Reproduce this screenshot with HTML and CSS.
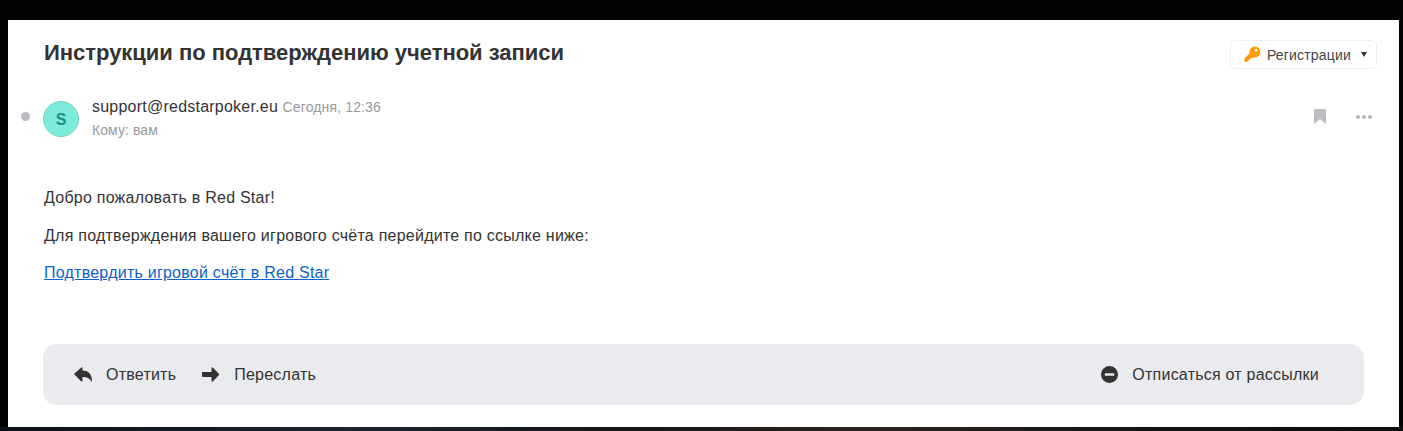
FILE: index.html
```html
<!DOCTYPE html>
<html lang="ru">
<head>
    <meta charset="UTF-8">
    <title>Инструкции по подтверждению учетной записи</title>
    <link rel="stylesheet" href="styles.css">
</head>
<body>
    <div class="letter">
        <div class="letter-head">
            <h1 class="subject">Инструкции по подтверждению учетной записи</h1>
            <div class="folder">
                <svg class="key-icon" width="17" height="17" viewBox="0 0 17 17">
                    <path fill="#ff9800" fill-rule="evenodd" d="M10.500.5a5.500 5.500 0 1 1-1.600 10.700L7.500 12.600H5.500v1.900H3.500V16H.5v-3.500l5.200-5.200A5.500 5.500 0 0 1 10.500.5zm1.500 2.300a1.500 1.500 0 1 0 0 3 1.500 1.500 0 0 0 0-3z"/>
                </svg>
                <span class="folder-name">Регистрации</span>
                <span class="folder-arrow"></span>
            </div>
        </div>

        <div class="sender-row">
            <span class="read-dot"></span>
            <div class="avatar">S</div>
            <div class="sender-info">
                <div class="sender-line">
                    <span class="sender">support@redstarpoker.eu</span>
                    <span class="date">Сегодня, 12:36</span>
                </div>
                <div class="recipient">Кому: вам</div>
            </div>
            <div class="sender-tools">
                <svg width="12" height="15" viewBox="0 0 12 15">
                    <path fill="#bcbcc4" d="M1 0h10a1 1 0 0 1 1 1v14L6 10 0 15V1a1 1 0 0 1 1-1z"/>
                </svg>
                <svg width="16" height="4" viewBox="0 0 16 4">
                    <circle cx="2" cy="2" r="2" fill="#b4b4bc"/>
                    <circle cx="8" cy="2" r="2" fill="#b4b4bc"/>
                    <circle cx="14" cy="2" r="2" fill="#b4b4bc"/>
                </svg>
            </div>
        </div>

        <div class="letter-body">
            <p>Добро пожаловать в Red Star!</p>
            <p>Для подтверждения вашего игрового счёта перейдите по ссылке ниже:</p>
            <p class="confirm"><a href="#">Подтвердить игровой счёт в Red Star</a></p>
        </div>

        <div class="actions">
            <div class="action">
                <svg width="18" height="15" viewBox="0 0 18 15">
                    <path fill="#333" d="M0 7 7 .7Q8.500-.3 8.500 1.500v2C14 3.500 18 6.500 18 15 15.500 11 12.500 10 8.500 10v3.500q0 1.800-1.500.8z"/>
                </svg>
                <span>Ответить</span>
            </div>
            <div class="action">
                <svg width="18" height="15" viewBox="0 0 18 15">
                    <path fill="#333" d="M17.500 7.500 11 14.300Q9.500 15.300 9.500 13.500V10H1Q0 10 0 9V6Q0 5 1 5h8.500V1.500Q9.500-.3 11 .7z"/>
                </svg>
                <span>Переслать</span>
            </div>
            <div class="action action-right">
                <svg width="17" height="17" viewBox="0 0 17 17">
                    <path fill="#333" fill-rule="evenodd" d="M8.500 0a8.500 8.500 0 1 1 0 17 8.500 8.500 0 0 1 0-17zM3.800 7.200v2.600h9.400V7.200z"/>
                </svg>
                <span>Отписаться от рассылки</span>
            </div>
        </div>
    </div>
</body>
</html>
```

FILE: styles.css
```css
* {
    margin: 0;
    padding: 0;
    box-sizing: border-box;
}

body {
    font-family: 'Liberation Sans', Arial, sans-serif;
    background: linear-gradient(90deg, #0c1018, #1c2430 25%, #151515 45%, #2c2420 62%, #141414 80%, #0c0c0c) bottom / 100% 4px no-repeat, #030303;
    color: #333;
    overflow: hidden;
    padding: 20px 4px 4px 8px;
    height: 431px;
}

.letter {
    background: #fff;
    height: 407px;
    padding: 20px 35px 0;
}

.letter-head {
    display: flex;
    justify-content: space-between;
    align-items: flex-start;
    margin-right: -13px;
    height: 56px;
}

.subject {
    font-size: 22px;
    line-height: 26px;
    font-weight: bold;
    letter-spacing: -0.02px;
    color: #333;
    margin-left: 1px;
}

.folder {
    display: flex;
    align-items: center;
    height: 29px;
    padding: 0 9px 0 13px;
    border: 1px solid #f0f0f2;
    border-radius: 5px;
    font-size: 14px;
    letter-spacing: 0.18px;
    color: #444;
}

.key-icon {
    margin-right: 6px;
}

.folder-arrow {
    width: 0;
    height: 0;
    margin-left: 10px;
    border-left: 3.500px solid transparent;
    border-right: 3.500px solid transparent;
    border-top: 5px solid #333;
}

.sender-row {
    display: flex;
    align-items: flex-start;
    margin-left: -22px;
    height: 80px;
}

.read-dot {
    width: 9px;
    height: 9px;
    margin-top: 16px;
    margin-right: 13px;
    border-radius: 50%;
    background: #bcbcc4;
}

.avatar {
    width: 36px;
    height: 36px;
    margin-top: 5px;
    margin-right: 13px;
    border-radius: 50%;
    background: #7cebda;
    border: 1px solid #6fd6c6;
    color: #1f8f7f;
    font-size: 16px;
    font-weight: bold;
    text-align: center;
    line-height: 36px;
}

.sender-info {
    padding-top: 1px;
}

.sender-line {
    line-height: 20px;
}

.sender {
    font-size: 16px;
    letter-spacing: 0.23px;
    color: #333;
}

.date {
    font-size: 14px;
    letter-spacing: 0.14px;
    color: #999;
}

.recipient {
    font-size: 14px;
    line-height: 20px;
    margin-top: 3px;
    letter-spacing: 0.07px;
    color: #999;
}

.sender-tools {
    display: flex;
    align-items: center;
    gap: 30px;
    margin-left: auto;
    margin-right: -8px;
    margin-top: 13px;
}

.letter-body {
    font-size: 16px;
    line-height: 20px;
    letter-spacing: 0.24px;
    margin-left: 1px;
    height: 168px;
    padding-top: 12px;
}

.letter-body p {
    margin-bottom: 18px;
}

.letter-body .confirm {
    margin-top: -1px;
}

.letter-body a {
    color: #0b62c8;
    text-decoration: underline;
}

.actions {
    display: flex;
    align-items: center;
    gap: 26px;
    height: 61px;
    padding: 0 45px 0 31px;
    border-radius: 14px;
    background: #eaebef;
    font-size: 16px;
    letter-spacing: 0.23px;
}

.action {
    display: flex;
    align-items: center;
    gap: 14px;
}

.action span {
    padding-top: 1px;
}

.action-right {
    margin-left: auto;
}
```
